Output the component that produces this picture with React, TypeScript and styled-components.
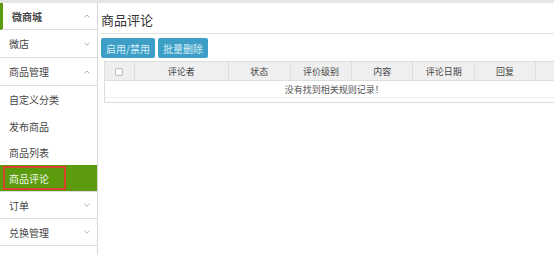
import React from "react";
import styled, { createGlobalStyle } from "styled-components";

const Global = createGlobalStyle`
  html, body { margin: 0; padding: 0; background: #fff; }
  body { font-family: "Noto Sans CJK SC", "Liberation Sans", sans-serif; color: #333; }
  * { box-sizing: border-box; }
`;

const Page = styled.div`
  display: flex;
  width: 554px;
  height: 255px;
  overflow: hidden;
  border-top: 3px solid #e6e6e6;
`;

const Sidebar = styled.nav`
  width: 98px;
  flex: none;
  border-right: 1px solid #d8d8d8;
  display: flex;
  flex-direction: column;
`;

const Item = styled.div<{ $active?: boolean; $top?: boolean; $sub?: boolean; $h?: number }>`
  flex: none;
  height: ${(p) => p.$h ?? 27}px;
  display: flex;
  align-items: center;
  justify-content: space-between;
  padding: 0 7px 0 9px;
  font-size: 10px;
  color: ${(p) => (p.$active ? "#f2f7ea" : "#444")};
  font-weight: ${(p) => (p.$top ? 700 : 400)};
  background: ${(p) => (p.$active ? "#5c9b0e" : "#fff")};
  border-bottom: ${(p) => (p.$sub ? "none" : "1px solid #dcdcdc")};
  border-left: ${(p) => (p.$top ? "3px solid #5c9b0e" : "none")};
  position: relative;
`;

const ActiveLabel = styled.span`
  position: absolute;
  left: 3px;
  top: 1px;
  bottom: 1px;
  width: 63px;
  border: 2px solid #d8442b;
  display: flex;
  align-items: center;
  padding-left: 4px;
`;

const Chevron = ({ up }: { up?: boolean }) => (
  <svg width="6" height="4" viewBox="0 0 6 4">
    <path
      d={up ? "M0.5 3.5 L3 1 L5.5 3.5" : "M0.5 0.8 L3 3.2 L5.5 0.8"}
      fill="none"
      stroke="#b5b5b5"
      strokeWidth="1"
    />
  </svg>
);

const Main = styled.main`
  flex: 1;
  padding: 0 0 0 3px;
  display: flex;
  flex-direction: column;
`;

const Title = styled.h1`
  margin: 0;
  font-size: 13px;
  font-weight: 400;
  color: #333;
  height: 31px;
  line-height: 33px;
  border-bottom: 1px solid #e3e3e3;
`;

const Toolbar = styled.div`
  display: flex;
  gap: 3px;
  padding-top: 4px;
  height: 24px;
`;

const Button = styled.button`
  height: 20px;
  padding: 0 5px;
  border: none;
  border-radius: 2px;
  background: #3d9fc6;
  color: #d6eef8;
  font-size: 10px;
  font-family: inherit;
`;

const Table = styled.table`
  margin: 3px 0 0 3px;
  border-collapse: collapse;
  width: 460px;
  font-size: 9px;
  border-left: 1px solid #dcdcdc;
  border-bottom: 1px solid #dcdcdc;
`;

const Th = styled.th<{ $w: number }>`
  width: ${(p) => p.$w}px;
  height: 19px;
  background: #efefef;
  font-weight: 400;
  color: #444;
  border: 1px solid #dedede;
  text-align: center;
  padding: 0;
`;

const Box = styled.span`
  display: inline-block;
  width: 8px;
  height: 8px;
  border: 1px solid #bbb;
  border-radius: 2px;
  background: #fff;
  vertical-align: middle;
`;

const Td = styled.td`
  height: 17px;
  text-align: center;
  color: #555;
  padding: 0;
  border-bottom: 1px solid #ececec;
`;

const Spacer = styled.tr`
  height: 5px;
`;

const cols: [string, number][] = [
  ["评论者", 94],
  ["状态", 62],
  ["评价级别", 62],
  ["内容", 61],
  ["评论日期", 62],
  ["回复", 61],
  ["", 28],
];

export default function App() {
  return (
    <>
      <Global />
      <Page>
        <Sidebar>
          <Item $top $h={27}>
            微商城<Chevron up />
          </Item>
          <Item $h={28}>
            微店<Chevron />
          </Item>
          <Item $h={28}>
            商品管理<Chevron up />
          </Item>
          <Item $sub>自定义分类</Item>
          <Item $sub $h={26}>发布商品</Item>
          <Item $sub $h={26}>商品列表</Item>
          <Item $active $h={27}>
            <ActiveLabel>商品评论</ActiveLabel>
          </Item>
          <Item>
            订单<Chevron />
          </Item>
          <Item>
            兑换管理<Chevron />
          </Item>
          <Item />
        </Sidebar>
        <Main>
          <Title>商品评论</Title>
          <Toolbar>
            <Button>启用/禁用</Button>
            <Button>批量删除</Button>
          </Toolbar>
          <Table>
            <thead>
              <tr>
                <Th $w={30}>
                  <Box />
                </Th>
                {cols.map(([c, w], i) => (
                  <Th key={i} $w={w}>
                    {c}
                  </Th>
                ))}
              </tr>
            </thead>
            <tbody>
              <tr>
                <Td colSpan={8}>没有找到相关规则记录！</Td>
              </tr>
              <Spacer />
            </tbody>
          </Table>
        </Main>
      </Page>
    </>
  );
}
